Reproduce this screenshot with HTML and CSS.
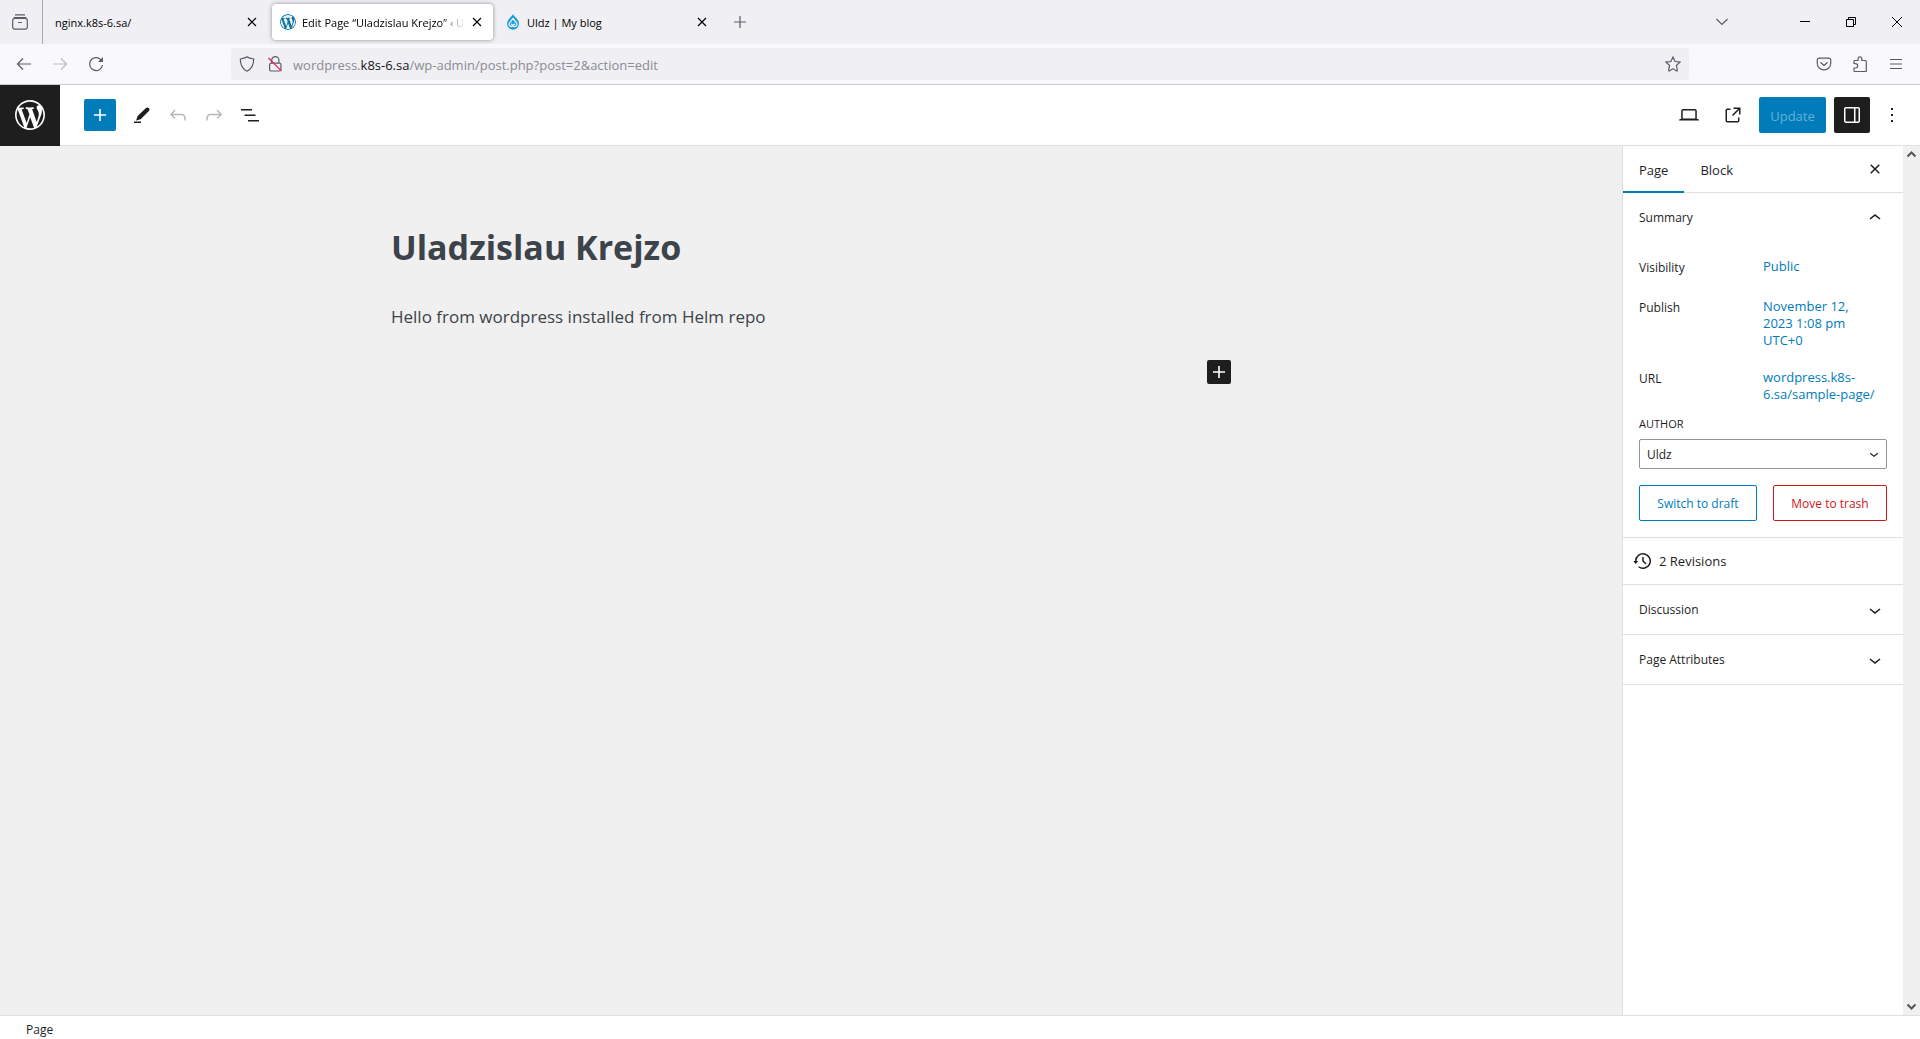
FILE: index.html
```html
<!DOCTYPE html>
<html lang="en">
<head>
<meta charset="utf-8">
<meta name="viewport" content="width=device-width, initial-scale=1">
<title>Edit Page “Uladzislau Krejzo”</title>
<link rel="stylesheet" href="styles.css">
</head>
<body>
<svg class="sprite" aria-hidden="true">
  <symbol id="wp" viewBox="0 0 20 20"><path d="M20 10c0-5.51-4.49-10-10-10C4.48 0 0 4.49 0 10c0 5.52 4.48 10 10 10 5.51 0 10-4.48 10-10zM7.78 15.37L4.37 6.22c.55-.02 1.17-.08 1.17-.08.5-.06.44-1.13-.06-1.11 0 0-1.45.11-2.37.11-.18 0-.37 0-.58-.01C4.12 2.69 6.87 1.11 10 1.11c2.33 0 4.45.87 6.05 2.34-.68-.11-1.65.39-1.65 1.58 0 .74.45 1.36.9 2.1.35.61.55 1.36.55 2.46 0 1.49-1.4 5-1.4 5l-3.03-8.37c.54-.02.82-.17.82-.17.5-.05.44-1.25-.06-1.22 0 0-1.44.12-2.38.12-.87 0-2.33-.12-2.33-.12-.5-.03-.56 1.2-.06 1.22l.92.08 1.26 3.41zM17.41 10c.24-.64.74-1.87.43-4.25.7 1.29 1.05 2.71 1.05 4.25 0 3.29-1.73 6.24-4.4 7.78.97-2.59 1.94-5.2 2.92-7.78zM6.1 18.09C3.12 16.65 1.11 13.53 1.11 10c0-1.3.23-2.48.72-3.59C3.25 10.3 4.67 14.2 6.1 18.09zm4.03-6.63l2.58 6.98c-.86.29-1.76.45-2.71.45-.79 0-1.57-.11-2.29-.33.81-2.38 1.62-4.74 2.42-7.1z"/></symbol>
  <symbol id="plus" viewBox="0 0 24 24"><path d="M18 11.2h-5.2V6h-1.6v5.2H6v1.6h5.2V18h1.6v-5.2H18z"/></symbol>
  <symbol id="x" viewBox="0 0 12 12"><path d="M2 2l8 8M10 2l-8 8" fill="none" stroke="currentColor" stroke-width="1.2"/></symbol>
  <symbol id="down" viewBox="0 0 24 24"><path d="M17.5 11.6L12 16l-5.5-4.4.9-1.2L12 14l4.5-3.6 1 1.2z"/></symbol>
</svg>

<div class="tabstrip">
  <button class="chrome-btn firefox-view" aria-label="Firefox View"><svg class="i16 line" viewBox="0 0 16 16"><path d="M3 .8h10M1.500 3.500h13M2.500 4.500h11a1.800 1.800 0 0 1 1.800 1.800v7a1.800 1.800 0 0 1-1.800 1.800h-11a1.800 1.800 0 0 1-1.800-1.800v-7a1.800 1.800 0 0 1 1.800-1.800zM6.200 8.500h3.600" /></svg></button>
  <div class="tabs">
    <div class="tab"><span class="tab-title">nginx.k8s-6.sa/</span><button class="tab-close" aria-label="Close tab"><svg class="i12"><use href="#x"/></svg></button></div>
    <div class="tab active"><svg class="i16 fav-wp"><circle cx="8" cy="8" r="8"/><use href="#wp" width="16" height="16"/></svg><span class="tab-title fade">Edit Page “Uladzislau Krejzo” ‹ U</span><button class="tab-close" aria-label="Close tab"><svg class="i12"><use href="#x"/></svg></button></div>
    <div class="tab"><svg class="i16" viewBox="0 0 16 16"><path d="M8 0C8.800 2.600 14 4.800 14 9.800A6 6 0 0 1 2 9.800C2 4.800 7.200 2.600 8 0z" fill="#1b9fdc"/><path d="M8 4.500L5 8.300a2.300 2.300 0 1 0 3.200 3.200l1.600-1.800M8 4.500l3.200 4a2.300 2.300 0 1 1-3.400 3L6.200 9.700" fill="none" stroke="#f0f0f4" stroke-width="1.300"/></svg><span class="tab-title">Uldz | My blog</span><button class="tab-close" aria-label="Close tab"><svg class="i12"><use href="#x"/></svg></button></div>
    <button class="chrome-btn" aria-label="New tab"><svg class="i12 line" viewBox="0 0 12 12"><path d="M6 0v12M0 6h12"/></svg></button>
  </div>
  <button class="chrome-btn list-tabs" aria-label="List all tabs"><svg class="i16 line" viewBox="0 0 16 16"><path d="M2.500 5L8 10.500 13.500 5"/></svg></button>
  <div class="window-btns">
    <button aria-label="Minimize"><svg class="i10" viewBox="0 0 10 10"><path d="M0 4.500h10"/></svg></button>
    <button aria-label="Restore"><svg class="i10" viewBox="0 0 10 10"><path d="M.5 2.500h7v7h-7zM2.500 2.500v-2h7v7h-2"/></svg></button>
    <button aria-label="Close"><svg class="i10" viewBox="0 0 10 10"><path d="M0 0l10 10M10 0L0 10"/></svg></button>
  </div>
</div>

<div class="navbar">
  <button class="chrome-btn" aria-label="Back"><svg class="i16 line" viewBox="0 0 16 16"><path d="M15 8H1.500M7 2.500L1.500 8 7 13.500"/></svg></button>
  <button class="chrome-btn" aria-label="Forward" disabled><svg class="i16 line" viewBox="0 0 16 16"><path d="M1 8h13.500M9 2.500L14.500 8 9 13.500"/></svg></button>
  <button class="chrome-btn" aria-label="Reload"><svg class="i16 line" viewBox="0 0 16 16"><path d="M14.500 9A6.500 6.500 0 1 1 12.600 3.400L14 4.800"/><path d="M15 1v5h-5z" fill="currentColor" stroke="none"/></svg></button>
  <div class="urlbar">
    <svg class="i16 line" viewBox="0 0 16 16"><path d="M8 .9C10 2 12.500 2.600 14.700 3c0 5-1.700 9.700-6.700 12.200C3 12.700 1.300 8 1.300 3 3.500 2.600 6 2 8 .9z"/></svg>
    <svg class="i16 line lock" viewBox="0 0 16 16"><path d="M4.700 7V4.300a3.600 3.600 0 0 1 7.200 0V7M4 7.200h8.500a1.400 1.400 0 0 1 1.400 1.400v5a1.400 1.400 0 0 1-1.400 1.400H4a1.400 1.400 0 0 1-1.400-1.400v-5A1.400 1.400 0 0 1 4 7.200z"/><path class="slash" d="M1.500 2l13 13.200"/></svg>
    <div class="url" role="textbox" aria-label="Address" contenteditable="true" spellcheck="false">wordpress.<b>k8s-6.sa</b>/wp-admin/post.php?post=2&amp;action=edit</div>
    <button class="star" aria-label="Bookmark this page"><svg class="i16 line" viewBox="0 0 16 16"><path d="M8 1l2.100 4.500 4.900.6-3.600 3.400 1 4.900a.6.6 0 0 1-.9.500L8 12.600l-3.500 2.300a.6.6 0 0 1-.9-.5l1-4.900L1 6.100l4.900-.6z"/></svg></button>
  </div>
  <button class="chrome-btn" aria-label="Save to Pocket"><svg class="i16 line" viewBox="0 0 16 16"><path d="M2.800 2.200h10.400a1.500 1.500 0 0 1 1.500 1.500v3.800a6.700 6.400 0 0 1-13.400 0V3.700a1.500 1.500 0 0 1 1.500-1.500zM4.500 6.200L8 9.400l3.500-3.200"/></svg></button>
  <button class="chrome-btn" aria-label="Extensions"><svg class="i16 line" viewBox="0 0 16 16"><path d="M2 7.500V5.500a1 1 0 0 1 1-1h3V2.700a1.900 1.900 0 0 1 3.800 0v1.800h3.500a1 1 0 0 1 1 1v9.200a1 1 0 0 1-1 1H3a1 1 0 0 1-1-1V12h1.500a2 2 0 0 0 0-4.300z"/></svg></button>
  <button class="chrome-btn" aria-label="Menu"><svg class="i16 line" viewBox="0 0 16 16"><path d="M2 3.500h12M2 8h12M2 12.500h12"/></svg></button>
</div>

<header class="toolbar">
  <a class="wp-logo" href="#" aria-label="View Pages"><svg><use href="#wp"/></svg></a>
  <div class="tools">
    <button class="inserter" aria-label="Toggle block inserter"><svg class="i24"><use href="#plus"/></svg></button>
    <button class="tool" aria-label="Tools"><svg class="i24" viewBox="0 0 24 24"><path d="M19 5.300c-.7-.9-2.100-1-3-.2L7.600 13l-1.500 4.500 4.600-1.200L18.900 8c.8-.8.800-1.900.1-2.700zM4 18.500h7V20H4z"/></svg></button>
    <button class="tool" aria-label="Undo" disabled><svg class="i24" viewBox="0 0 24 24"><path d="M18.300 11.700c-.6-.6-1.400-.9-2.300-.9H6.700l2.900-3.300-1.100-1-4.500 5L8.500 16l1-1-2.700-2.700H16c.5 0 .9.2 1.300.5 1 1 1 3.400 1 4.500v.3h1.500v-.2c0-1.500 0-4.300-1.500-5.700z"/></svg></button>
    <button class="tool" aria-label="Redo" disabled><svg class="i24" viewBox="0 0 24 24"><path d="M15.600 6.500l-1.100 1 2.900 3.300H8c-.9 0-1.700.3-2.300.9-1.400 1.500-1.400 4.200-1.400 5.600v.2h1.500v-.3c0-1.100 0-3.500 1-4.500.3-.3.7-.5 1.300-.5h9.200L14.500 15l1.100 1.100 4.600-4.600-4.600-5z"/></svg></button>
    <button class="tool" aria-label="Document overview"><svg class="i24" viewBox="0 0 24 24"><path d="M3 6h11v1.500H3V6Zm3.500 5.500h11V13h-11v-1.500ZM21 17H10v1.500h11V17Z"/></svg></button>
  </div>
  <div class="settings">
    <button class="tool" aria-label="Preview"><svg class="i24" viewBox="0 0 24 24"><path d="M20.500 16h-.7V8c0-1.100-.9-2-2-2H6.200c-1.100 0-2 .9-2 2v8h-.7c-.8 0-1.500.7-1.500 1.500h20c0-.8-.7-1.500-1.500-1.500zM5.700 8c0-.3.2-.5.5-.5h11.600c.3 0 .5.2.5.5v7.600H5.700V8z"/></svg></button>
    <a class="tool" href="#" aria-label="View Page"><svg class="i24" viewBox="0 0 24 24"><path d="M19.500 4.500h-7V6h4.440l-5.970 5.970 1.060 1.060L18 7.060v4.440h1.500v-7Zm-13 1a2 2 0 0 0-2 2v10a2 2 0 0 0 2 2h10a2 2 0 0 0 2-2v-3H17v3a.5.5 0 0 1-.5.5h-10a.5.5 0 0 1-.5-.5v-10a.5.5 0 0 1 .5-.5h3V5.500h-3Z"/></svg></a>
    <button class="update" disabled>Update</button>
    <button class="tool pressed" aria-label="Settings"><svg class="i24" viewBox="0 0 24 24"><path d="M18 4H6c-1.100 0-2 .9-2 2v12c0 1.100.9 2 2 2h12c1.100 0 2-.9 2-2V6c0-1.100-.9-2-2-2zm-4 14.500H6c-.3 0-.5-.2-.5-.5V6c0-.3.2-.5.5-.5h8v13zm4.500-.5c0 .3-.2.5-.5.500h-2.500v-13H18c.3 0 .5.2.5.500v12z"/></svg></button>
    <button class="tool more" aria-label="Options"><svg class="i24" viewBox="0 0 24 24"><path d="M13 19h-2v-2h2v2zm0-6h-2v-2h2v2zm0-6h-2V5h2v2z"/></svg></button>
  </div>
</header>

<div class="workspace">
  <main class="canvas">
    <article class="post">
      <h1>Uladzislau Krejzo</h1>
      <p>Hello from wordpress installed from Helm repo</p>
      <button class="add-block" aria-label="Add block"><svg class="i24"><use href="#plus"/></svg></button>
    </article>
  </main>
  <aside class="sidebar">
    <div class="panel-tabs">
      <button class="panel-tab selected">Page</button>
      <button class="panel-tab">Block</button>
      <button class="panel-close" aria-label="Close settings"><svg class="i24" viewBox="0 0 24 24"><path d="M12 13.060l3.712 3.713 1.061-1.060L13.061 12l3.712-3.712-1.060-1.060L12 10.938 8.288 7.227l-1.061 1.060L10.939 12l-3.712 3.712 1.060 1.061L12 13.061z"/></svg></button>
    </div>
    <section class="summary">
      <button class="panel-toggle">Summary<svg class="i24" viewBox="0 0 24 24"><path d="M6.500 12.400L12 8l5.500 4.400-.9 1.200L12 10l-4.500 3.600-1-1.200z"/></svg></button>
      <dl class="facts">
        <dt>Visibility</dt><dd><a href="#">Public</a></dd>
        <dt>Publish</dt><dd><a href="#">November 12,<br>2023 1:08 pm<br>UTC+0</a></dd>
        <dt>URL</dt><dd><a href="#">wordpress.k8s-<br>6.sa/sample-page/</a></dd>
      </dl>
      <label class="author-label" for="author">Author</label>
      <div class="select-wrap">
        <select id="author"><option>Uldz</option></select>
        <svg viewBox="0 0 24 24"><use href="#down"/></svg>
      </div>
      <div class="actions">
        <button class="draft">Switch to draft</button>
        <button class="trash">Move to trash</button>
      </div>
    </section>
    <a class="revisions" href="#"><svg class="i24" viewBox="0 0 24 24"><path d="M5.500 12h1.750l-2.500 3-2.500-3H4a8 8 0 113.134 6.350l.907-1.194A6.500 6.500 0 105.500 12zm9.530 1.970l-2.280-2.280V8.500a.75.75 0 00-1.500 0V12a.747.747 0 00.218.529l1.282-.84-1.280.842 2.500 2.500a.75.75 0 101.060-1.061z"/></svg>2 Revisions</a>
    <button class="panel-toggle closed">Discussion<svg class="i24"><use href="#down"/></svg></button>
    <button class="panel-toggle closed">Page Attributes<svg class="i24"><use href="#down"/></svg></button>
  </aside>
  <div class="scrollbar" aria-hidden="true">
    <svg viewBox="0 0 17 17"><path d="M4.500 10.500l4-4 4 4"/></svg>
    <svg viewBox="0 0 17 17"><path d="M4.500 6.500l4 4 4-4"/></svg>
  </div>
</div>

<footer class="breadcrumb">Page</footer>
</body>
</html>
```

FILE: styles.css
```css
* { box-sizing: border-box; }

body {
  margin: 0;
  min-height: 100vh;
  display: flex;
  flex-direction: column;
  background: #fff;
  color: #1e1e1e;
  font: 12px/17px "Open Sans", "Noto Sans", sans-serif;
}

button, select { font: inherit; color: inherit; }
button { border: 0; padding: 0; background: none; }
a { color: inherit; text-decoration: none; }
svg { display: block; flex: none; fill: currentColor; }
.sprite { display: none; }

.i10 { width: 10px; height: 10px; }
.i12 { width: 12px; height: 12px; }
.i16 { width: 16px; height: 16px; }
.i24 { width: 24px; height: 24px; }
.line { fill: none; stroke: currentColor; stroke-width: 1.2; }

/* Browser tab strip */
.tabstrip {
  display: flex;
  align-items: center;
  height: 44px;
  background: #f0f0f4;
  color: #000;
}
.chrome-btn {
  display: grid;
  place-items: center;
  width: 36px;
  height: 36px;
  color: #5b5b66;
}
.chrome-btn:disabled { color: #bebec3; }
.firefox-view {
  width: 43px;
  height: 44px;
  padding-right: 3px;
  border-right: 1px solid #a9a9b0;
}
.tabs {
  display: flex;
  align-items: center;
  flex: 1;
  gap: 4px;
  padding-left: 4px;
}
.tab {
  display: flex;
  align-items: center;
  gap: 6px;
  width: 221px;
  height: 36px;
  padding: 0 4px 0 8px;
  border-radius: 4px;
}
.tab.active { background: #fff; box-shadow: 0 0 4px rgba(0, 0, 0, .4); }
.tab-title { flex: 1; font-size: 11px; overflow: hidden; white-space: nowrap; }
.fade { mask-image: linear-gradient(to left, transparent, #000 24px); }
.tab-close { display: grid; place-items: center; width: 24px; height: 24px; margin-left: -6px; }
.fav-wp { color: #0f719f; border-radius: 8px; }
.fav-wp circle { fill: #e4f1f8; }
.list-tabs { margin-right: 42px; }
.window-btns { display: flex; }
.window-btns button { display: grid; place-items: center; width: 46px; height: 44px; }
.window-btns svg { fill: none; stroke: #000; }

/* Browser address bar */
.navbar {
  display: flex;
  align-items: center;
  height: 41px;
  padding: 0 6px;
  border-bottom: 1px solid #ccccd0;
  background: #f9f9fb;
}
.urlbar {
  display: flex;
  align-items: center;
  flex: 1;
  gap: 10px;
  height: 32px;
  margin: 0 117px;
  padding: 0 8px;
  border-radius: 4px;
  background: #f0f0f4;
  color: #5b5b66;
}
.lock { margin-left: 2px; }
.lock .slash { stroke: #e22850; }
.url {
  flex: 1;
  padding-top: 2px;
  font-size: 13px;
  line-height: 20px;
  color: #8b8b92;
  white-space: nowrap;
  outline: 0;
}
.url b { font-weight: 400; color: #15141a; }

/* Editor toolbar */
.toolbar {
  display: flex;
  align-items: center;
  height: 61px;
  border-bottom: 1px solid #e0e0e0;
}
.wp-logo {
  display: grid;
  place-items: center;
  width: 60px;
  height: 61px;
  background: #1e1e1e;
  color: #fff;
}
.wp-logo svg { width: 30px; height: 30px; }
.tools { display: flex; align-items: center; flex: 1; padding-left: 24px; }
.tool { display: grid; place-items: center; width: 36px; height: 36px; }
.tool:disabled { color: #b8b8b8; }
.inserter {
  display: grid;
  place-items: center;
  width: 32px;
  height: 32px;
  margin-right: 8px;
  border-radius: 2px;
  background: #007cba;
  color: #fff;
}
.settings { display: flex; gap: 8px; padding-right: 10px; }
.update {
  width: 67px;
  height: 36px;
  padding-top: 2px;
  border-radius: 2px;
  background: #007cba;
  color: #66b0d6;
  font-size: 13px;
}
.pressed { border-radius: 2px; background: #1e1e1e; color: #fff; }
.more { margin-left: -4px; }

/* Editing canvas */
.workspace { display: flex; flex: 1; }
.canvas { flex: 1; background: #f0f0f0; color: #3c434a; }
.post {
  display: flex;
  flex-direction: column;
  max-width: 840px;
  margin: 0 auto;
  padding-top: 76px;
}
h1 { margin: 0; font-size: 34px; line-height: 50px; }
p { margin: 31px 0 29px; font-size: 17px; line-height: 28px; }
.add-block {
  align-self: flex-end;
  border-radius: 2px;
  background: #1e1e1e;
  color: #fff;
}

/* Settings sidebar */
.sidebar { width: 281px; border-left: 1px solid #e0e0e0; }
.panel-tabs { display: flex; height: 47px; border-bottom: 1px solid #e0e0e0; }
.panel-tab { height: 47px; padding: 2px 16px 0; font-size: 13px; }
.panel-tab.selected { box-shadow: inset 0 -2px #007cba; }
.panel-close { margin: 0 16px 0 auto; }
.summary { padding-bottom: 16px; border-bottom: 1px solid #e0e0e0; }
.panel-toggle {
  display: flex;
  align-items: center;
  justify-content: space-between;
  width: 100%;
  height: 49px;
  padding: 0 16px;
}
.closed { height: 50px; border-bottom: 1px solid #e0e0e0; }
.facts {
  display: grid;
  grid-template-columns: 108px 1fr;
  grid-template-rows: 20px auto auto;
  row-gap: 20px;
  margin: 0;
  padding: 16px 16px 0;
}
.facts dd { margin: 0 0 0 16px; color: #007cba; font-size: 13px; }
.facts dt { line-height: 19px; }
.author-label {
  display: block;
  padding: 12px 16px 7px;
  font-size: 11px;
  text-transform: uppercase;
}
.select-wrap { position: relative; margin: 0 16px; }
.select-wrap select {
  display: block;
  width: 100%;
  height: 30px;
  padding: 0 7px;
  border: 1px solid #949494;
  border-radius: 2px;
  background: #fff;
  appearance: none;
}
.select-wrap svg {
  position: absolute;
  top: 6px;
  right: 4px;
  width: 18px;
  height: 18px;
  pointer-events: none;
}
.actions { display: flex; gap: 16px; padding: 16px 16px 0; }
.actions button {
  flex: auto;
  height: 36px;
  border: 1px solid;
  border-radius: 2px;
}
.actions .draft { color: #007cba; }
.actions .trash { color: #cc1818; }
.revisions {
  display: flex;
  align-items: center;
  gap: 4px;
  height: 47px;
  padding-left: 8px;
  border-bottom: 1px solid #e0e0e0;
  font-size: 13px;
}

.scrollbar {
  display: flex;
  flex-direction: column;
  justify-content: space-between;
  width: 17px;
  background: #f0f0f0;
}
.scrollbar svg { width: 17px; height: 17px; fill: none; stroke: #555; stroke-width: 2; }

.breadcrumb {
  height: 24px;
  padding: 5px 26px 0;
  border-top: 1px solid #e0e0e0;
}
```
